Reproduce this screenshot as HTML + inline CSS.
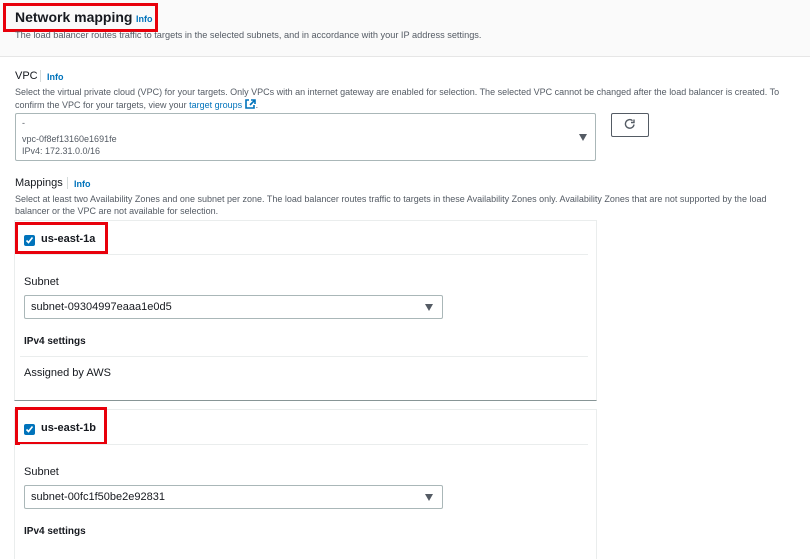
<!DOCTYPE html>
<html><head><meta charset="utf-8"><style>
*{margin:0;padding:0;box-sizing:border-box}
body{width:810px;height:544px;overflow:hidden;background:#fff;font-family:"Liberation Sans",sans-serif;color:#16191f;position:relative}
.a{position:absolute;white-space:nowrap}
.hdr{position:absolute;left:0;top:0;width:810px;height:57px;background:#fafafa;border-bottom:1px solid #e6e6e6}
.red{position:absolute;border:3px solid #e8000b}
.info{color:#0073bb;font-weight:bold;font-size:9px}
.small{font-size:9px;color:#545b64}
.lbl{font-size:11px;color:#16191f}
.card{position:absolute;left:14px;width:583px;border:1px solid #eaeded;border-bottom:1px solid #879596;background:#fff}
.hl{position:absolute;height:1px;background:#eaeded}
.sel{position:absolute;border:1px solid #aab7b8;border-radius:2px;background:#fff;font-size:11px;color:#16191f}
.tri{position:absolute;width:0;height:0;border-left:4.5px solid transparent;border-right:4.5px solid transparent;border-top:7px solid #545b64}
.cb{position:absolute;width:11px;height:11px;background:#0073bb;border-radius:2px}
</style></head><body>
<div class="hdr"></div>
<div class="a" style="left:15px;top:9px;font-size:14px;font-weight:bold">Network mapping</div>
<div class="a info" style="left:136px;top:14px">Info</div>
<div class="red" style="left:3px;top:3px;width:155px;height:29px"></div>
<div class="a small" style="left:15px;top:30px;font-size:9.2px">The load balancer routes traffic to targets in the selected subnets, and in accordance with your IP address settings.</div>

<div class="a lbl" style="left:15px;top:70px">VPC</div>
<div class="a" style="left:40px;top:70px;width:1px;height:12px;background:#d5dbdb"></div>
<div class="a info" style="left:47px;top:72px">Info</div>
<div class="a small" style="left:15px;top:87px">Select the virtual private cloud (VPC) for your targets. Only VPCs with an internet gateway are enabled for selection. The selected VPC cannot be changed after the load balancer is created. To</div>
<div class="a small" style="left:15px;top:99px">confirm the VPC for your targets, view your <span style="color:#0073bb">target groups</span> <svg width="11" height="10" viewBox="0 0 11 10" style="vertical-align:-1px"><path d="M4 1H1v8h8V6" fill="none" stroke="#0073bb" stroke-width="1.6"/><path d="M6 1h4v4M10 1L5 6" fill="none" stroke="#0073bb" stroke-width="1.6"/></svg>.</div>
<div class="sel" style="left:15px;top:113px;width:581px;height:48px"></div>
<div class="a small" style="left:22px;top:118px;color:#545b64">-</div>
<div class="a small" style="left:22px;top:134px">vpc-0f8ef13160e1691fe</div>
<div class="a small" style="left:22px;top:146px">IPv4: 172.31.0.0/16</div>
<div class="tri" style="left:579px;top:134px"></div>
<div class="a" style="left:611px;top:113px;width:38px;height:24px;border:1px solid #545b64;border-radius:2px"></div>
<svg class="a" style="left:623px;top:117px" width="14" height="14" viewBox="0 0 14 14"><path d="M11 7.5A4.3 4.3 0 1 1 9.5 3.6" fill="none" stroke="#545b64" stroke-width="1.4"/><path d="M8 2.5h3v-3" fill="none" stroke="#545b64" stroke-width="1.4" transform="translate(0,3)"/></svg>

<div class="a lbl" style="left:15px;top:177px">Mappings</div>
<div class="a" style="left:67px;top:177px;width:1px;height:12px;background:#d5dbdb"></div>
<div class="a info" style="left:74px;top:179px">Info</div>
<div class="a small" style="left:15px;top:194px">Select at least two Availability Zones and one subnet per zone. The load balancer routes traffic to targets in these Availability Zones only. Availability Zones that are not supported by the load</div>
<div class="a small" style="left:15px;top:206px">balancer or the VPC are not available for selection.</div>

<div class="card" style="top:220px;height:181px"></div>
<div class="cb" style="left:24px;top:235px"></div>
<svg class="a" style="left:25px;top:236px" width="9" height="9" viewBox="0 0 9 9"><path d="M1.5 4.5l2 2 4-5" fill="none" stroke="#fff" stroke-width="1.6"/></svg>
<div class="a" style="left:41px;top:233px;font-size:11px;font-weight:bold">us-east-1a</div>
<div class="red" style="left:15px;top:222px;width:93px;height:32px"></div>
<div class="hl" style="left:20px;top:254px;width:568px"></div>
<div class="a lbl" style="left:24px;top:276px;color:#16191f">Subnet</div>
<div class="sel" style="left:24px;top:295px;width:419px;height:24px"></div>
<div class="a" style="left:31px;top:301px;font-size:11px">subnet-09304997eaaa1e0d5</div>
<div class="tri" style="left:425px;top:304px"></div>
<div class="a" style="left:24px;top:336px;font-size:10px;font-weight:bold">IPv4 settings</div>
<div class="hl" style="left:20px;top:356px;width:568px"></div>
<div class="a" style="left:24px;top:367px;font-size:11px;color:#16191f">Assigned by AWS</div>

<div class="card" style="top:409px;height:150px;border-bottom:none"></div>
<div class="cb" style="left:24px;top:424px"></div>
<svg class="a" style="left:25px;top:425px" width="9" height="9" viewBox="0 0 9 9"><path d="M1.5 4.5l2 2 4-5" fill="none" stroke="#fff" stroke-width="1.6"/></svg>
<div class="a" style="left:41px;top:422px;font-size:11px;font-weight:bold">us-east-1b</div>
<div class="red" style="left:15px;top:407px;width:92px;height:38px"></div>
<div class="hl" style="left:20px;top:444px;width:568px"></div>
<div class="a lbl" style="left:24px;top:466px">Subnet</div>
<div class="sel" style="left:24px;top:485px;width:419px;height:24px"></div>
<div class="a" style="left:31px;top:491px;font-size:11px">subnet-00fc1f50be2e92831</div>
<div class="tri" style="left:425px;top:494px"></div>
<div class="a" style="left:24px;top:526px;font-size:10px;font-weight:bold">IPv4 settings</div>
</body></html>
